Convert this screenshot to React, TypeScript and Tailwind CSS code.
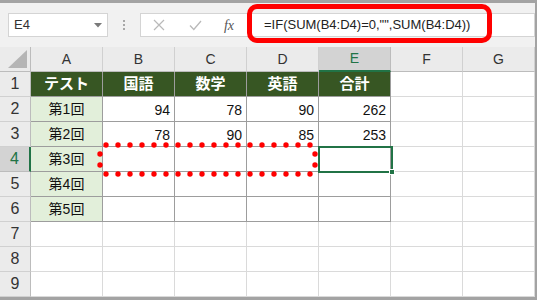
import React from "react";

const COLS = ["A", "B", "C", "D", "E", "F", "G"];
type Cell = { t?: string; kind?: "head" | "label" | "num" };

const data: Cell[][] = [
  [
    { t: "テスト", kind: "head" },
    { t: "国語", kind: "head" },
    { t: "数学", kind: "head" },
    { t: "英語", kind: "head" },
    { t: "合計", kind: "head" },
  ],
  [
    { t: "第1回", kind: "label" },
    { t: "94", kind: "num" },
    { t: "78", kind: "num" },
    { t: "90", kind: "num" },
    { t: "262", kind: "num" },
  ],
  [
    { t: "第2回", kind: "label" },
    { t: "78", kind: "num" },
    { t: "90", kind: "num" },
    { t: "85", kind: "num" },
    { t: "253", kind: "num" },
  ],
  [{ t: "第3回", kind: "label" }, {}, {}, {}, {}],
  [{ t: "第4回", kind: "label" }, {}, {}, {}, {}],
  [{ t: "第5回", kind: "label" }, {}, {}, {}, {}],
];

const font = { fontFamily: '"Liberation Sans", "Noto Sans CJK JP", sans-serif' };

function RedDots() {
  const dots: [number, number][] = [];
  for (let i = 0; i < 18; i++) {
    const x = 10 + i * 12;
    dots.push([x, 4]);
    dots.push([x, 33]);
  }
  dots.push([4, 13], [4, 24], [219, 13], [219, 24]);
  return (
    <svg
      className="absolute left-[96px] top-[94px] z-20 pointer-events-none"
      width="224"
      height="38"
      viewBox="0 0 224 38"
    >
      {dots.map(([x, y], i) => (
        <circle key={i} cx={x} cy={y} r="2.7" fill="#ff0000" />
      ))}
    </svg>
  );
}

export default function App() {
  return (
    <div
      className="relative w-[537px] h-[300px] bg-[#f1f1f1] border-t-[3px] border-r-2 border-b-[3px] border-[#a3a3a3] flex flex-col overflow-hidden"
      style={font}
    >
      {/* formula bar */}
      <div className="h-[44px] flex items-start pt-[10px] pl-[8px]">
        <div className="w-[100px] h-[24px] bg-white border border-[#d4d4d4] flex items-center pl-[5px] pr-[5px] text-[13px] text-[#333]">
          <span className="flex-1">E4</span>
          <svg width="8" height="5" viewBox="0 0 8 5">
            <path d="M0 0 L8 0 L4 4.5 Z" fill="#7a7a7a" />
          </svg>
        </div>
        <div className="w-[32px] h-[24px] flex flex-col items-center justify-center gap-[2px]">
          <div className="w-[2px] h-[2px] bg-[#a8a8a8]" />
          <div className="w-[2px] h-[2px] bg-[#a8a8a8]" />
          <div className="w-[2px] h-[2px] bg-[#a8a8a8]" />
        </div>
        <div className="w-[110px] h-[24px] bg-white border border-[#d4d4d4] flex items-center">
          <div className="w-[36px] flex justify-center">
            <svg width="12" height="12" viewBox="0 0 12 12">
              <path d="M1 1 L11 11 M11 1 L1 11" stroke="#b9b9b9" strokeWidth="1.2" fill="none" />
            </svg>
          </div>
          <div className="w-[36px] flex justify-center">
            <svg width="13" height="11" viewBox="0 0 13 11">
              <path d="M1 5.5 L4.8 9.5 L12 1" stroke="#b9b9b9" strokeWidth="1.3" fill="none" />
            </svg>
          </div>
          <div
            className="w-[32px] flex justify-center text-[14px] italic text-[#555]"
            style={{ fontFamily: '"Liberation Serif", serif' }}
          >
            fx
          </div>
        </div>
        <div className="flex-1 h-[24px] bg-white border-y border-r border-[#d4d4d4] flex items-center pl-[14px] text-[13px] text-[#222] whitespace-nowrap">
          =IF(SUM(B4:D4)=0,"",SUM(B4:D4))
        </div>
      </div>

      {/* red highlight around formula */}
      <div className="absolute left-[247px] top-[1px] w-[245px] h-[39px] border-[5px] border-[#ff0000] rounded-[10px] z-30 pointer-events-none" />

      {/* sheet */}
      <div className="relative grid grid-cols-[31px_repeat(7,72px)] grid-rows-[repeat(10,25px)] bg-white">
        {/* corner */}
        <div className="bg-[#ebebeb] border-r border-b border-[#bcbcbc] relative">
          <svg className="absolute right-[3px] bottom-[3px]" width="19" height="18" viewBox="0 0 19 18">
            <path d="M19 0 L19 18 L0 18 Z" fill="#b5b5b5" />
          </svg>
        </div>
        {COLS.map((c) => {
          const sel = c === "E";
          return (
            <div
              key={c}
              className={
                sel
                  ? "bg-[#d3d3d3] border-r border-r-[#bcbcbc] border-b-2 border-b-[#217346] flex items-center justify-center text-[14px] text-[#217346]"
                  : "bg-[#ebebeb] border-r border-r-[#d0d0d0] border-b border-b-[#bcbcbc] flex items-center justify-center text-[14px] text-[#333]"
              }
            >
              {c}
            </div>
          );
        })}
        {Array.from({ length: 9 }).map((_, r) => {
          const rowSel = r === 3;
          return (
            <React.Fragment key={r}>
              <div
                className={
                  rowSel
                    ? "bg-[#d3d3d3] border-r-2 border-r-[#217346] border-b border-b-[#bcbcbc] flex items-center justify-center text-[16px] text-[#217346]"
                    : "bg-[#ebebeb] border-r border-r-[#bcbcbc] border-b border-b-[#d0d0d0] flex items-center justify-center text-[16px] text-[#333]"
                }
              >
                {r + 1}
              </div>
              {COLS.map((c, ci) => {
                const inTable = r < 6 && ci < 5;
                const cell = inTable ? data[r][ci] : {};
                const sel = r === 3 && ci === 4;
                let cls = "relative border-r border-b flex items-center ";
                cls += inTable ? "border-[#9d9d9d] " : "border-[#dadada] ";
                if (cell.kind === "head") {
                  cls += "bg-[#375623] text-white font-bold text-[15px] justify-center ";
                } else if (cell.kind === "label") {
                  cls += "bg-[#e2efda] text-[#111] text-[14px] justify-center ";
                } else if (cell.kind === "num") {
                  cls += "bg-white text-[#111] text-[14px] justify-end pr-[4px] pt-[3px] ";
                }
                return (
                  <div key={c} className={cls}>
                    {cell.t}
                    {sel && (
                      <div className="absolute -left-[1px] -top-[1px] w-[75px] h-[27px] border-2 border-[#217346] z-10">
                        <div className="absolute -right-[4px] -bottom-[4px] w-[6px] h-[6px] bg-[#217346] border border-white" />
                      </div>
                    )}
                  </div>
                );
              })}
            </React.Fragment>
          );
        })}
        <RedDots />
      </div>
    </div>
  );
}
